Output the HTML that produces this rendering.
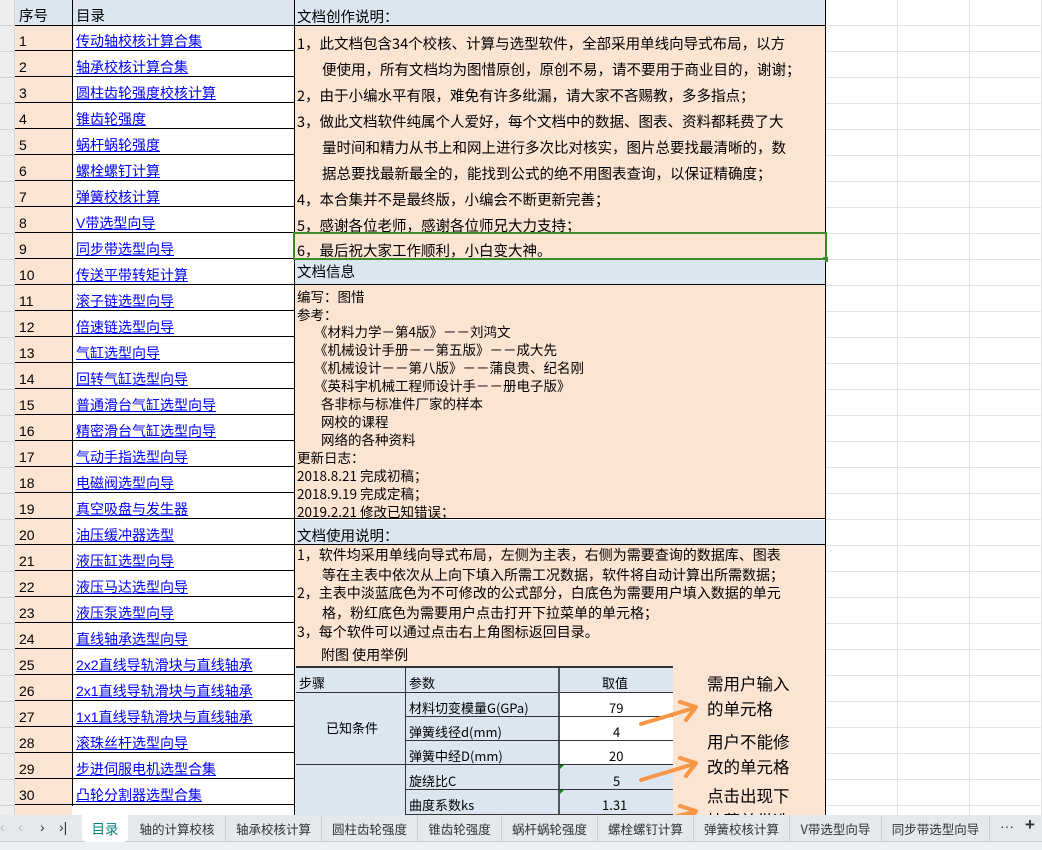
<!DOCTYPE html>
<html><head><meta charset="utf-8"><style>
*{margin:0;padding:0;box-sizing:border-box}
body{width:1042px;height:850px;overflow:hidden;background:#fff;font-family:"Liberation Sans","Noto Sans CJK SC",sans-serif;color:#000;position:relative}
.a{position:absolute;white-space:nowrap}
.r{position:absolute;left:15px;width:279px;height:26px;border-bottom:1px solid #000}
.r .n{position:absolute;left:0;width:57px;height:25px;font-size:14px;padding:8px 0 0 4px}
.r .l{position:absolute;left:61px;top:6px;font-size:14px;color:#0000ff;text-decoration:underline}
.t{position:absolute;font-size:14.5px;white-space:nowrap;font-family:"Noto Sans CJK SC",sans-serif}
.s{position:absolute;font-size:13.5px;white-space:nowrap;font-family:"Noto Sans CJK SC",sans-serif;line-height:18px}
.tab{position:absolute;top:815px;height:27px;font-size:12.5px;font-family:"Noto Sans CJK SC",sans-serif;line-height:27px;color:#333;border-right:1px solid #c8ced3;text-align:center}
</style></head><body>
<!-- right grid -->
<div class="a" style="left:826px;top:0;width:216px;height:815px;background-image:linear-gradient(to right,#e2e2e2 1px,transparent 1px),linear-gradient(to bottom,#e2e2e2 1px,transparent 1px);background-size:72px 26px;background-position:71px 25px"></div>
<!-- row header -->
<div class="a" style="left:0;top:0;width:15px;height:815px;background:#eeeeee;border-right:1px solid #d4d4d4"></div>
<div class="a" style="left:0;top:0;width:15px;height:815px;background-image:linear-gradient(to bottom,#d4d4d4 1px,transparent 1px);background-size:15px 26px;background-position:0 25px"></div>
<!-- col A peach -->
<div class="a" style="left:15px;top:26px;width:57px;height:789px;background:#fce4d3"></div>
<!-- header row -->
<div class="a" style="left:15px;top:0;width:811px;height:26px;background:#dce6f1;border-bottom:1px solid #000"></div>
<div class="a" style="left:72px;top:0;width:1px;height:806px;background:#000"></div>
<div class="a" style="left:294px;top:0;width:1px;height:815px;background:#000"></div>
<div class="a" style="left:825px;top:0;width:1px;height:815px;background:#000"></div>
<div class="t" style="left:19px;top:5px">序号</div>
<div class="t" style="left:76px;top:5px">目录</div>
<div class="t" style="left:297px;top:6px">文档创作说明：</div>
<!-- left rows -->
<div class="r" style="top:25px"><div class="n">1</div><div class="l">传动轴校核计算合集</div></div>
<div class="r" style="top:51px"><div class="n">2</div><div class="l">轴承校核计算合集</div></div>
<div class="r" style="top:77px"><div class="n">3</div><div class="l">圆柱齿轮强度校核计算</div></div>
<div class="r" style="top:103px"><div class="n">4</div><div class="l">锥齿轮强度</div></div>
<div class="r" style="top:129px"><div class="n">5</div><div class="l">蜗杆蜗轮强度</div></div>
<div class="r" style="top:155px"><div class="n">6</div><div class="l">螺栓螺钉计算</div></div>
<div class="r" style="top:181px"><div class="n">7</div><div class="l">弹簧校核计算</div></div>
<div class="r" style="top:207px"><div class="n">8</div><div class="l">V带选型向导</div></div>
<div class="r" style="top:233px"><div class="n">9</div><div class="l">同步带选型向导</div></div>
<div class="r" style="top:259px"><div class="n">10</div><div class="l">传送平带转矩计算</div></div>
<div class="r" style="top:285px"><div class="n">11</div><div class="l">滚子链选型向导</div></div>
<div class="r" style="top:311px"><div class="n">12</div><div class="l">倍速链选型向导</div></div>
<div class="r" style="top:337px"><div class="n">13</div><div class="l">气缸选型向导</div></div>
<div class="r" style="top:363px"><div class="n">14</div><div class="l">回转气缸选型向导</div></div>
<div class="r" style="top:389px"><div class="n">15</div><div class="l">普通滑台气缸选型向导</div></div>
<div class="r" style="top:415px"><div class="n">16</div><div class="l">精密滑台气缸选型向导 </div></div>
<div class="r" style="top:441px"><div class="n">17</div><div class="l">气动手指选型向导</div></div>
<div class="r" style="top:467px"><div class="n">18</div><div class="l">电磁阀选型向导</div></div>
<div class="r" style="top:493px"><div class="n">19</div><div class="l">真空吸盘与发生器</div></div>
<div class="r" style="top:519px"><div class="n">20</div><div class="l">油压缓冲器选型</div></div>
<div class="r" style="top:545px"><div class="n">21</div><div class="l">液压缸选型向导</div></div>
<div class="r" style="top:571px"><div class="n">22</div><div class="l">液压马达选型向导</div></div>
<div class="r" style="top:597px"><div class="n">23</div><div class="l">液压泵选型向导</div></div>
<div class="r" style="top:623px"><div class="n">24</div><div class="l">直线轴承选型向导</div></div>
<div class="r" style="top:649px"><div class="n">25</div><div class="l">2x2直线导轨滑块与直线轴承</div></div>
<div class="r" style="top:675px"><div class="n">26</div><div class="l">2x1直线导轨滑块与直线轴承</div></div>
<div class="r" style="top:701px"><div class="n">27</div><div class="l">1x1直线导轨滑块与直线轴承</div></div>
<div class="r" style="top:727px"><div class="n">28</div><div class="l">滚珠丝杆选型向导</div></div>
<div class="r" style="top:753px"><div class="n">29</div><div class="l">步进伺服电机选型合集</div></div>
<div class="r" style="top:779px"><div class="n">30</div><div class="l">凸轮分割器选型合集</div></div>
<!-- section 1 -->
<div class="a" style="left:295px;top:26px;width:530px;height:233px;background:#fce4d3"></div>
<div class="t" style="left:297px;top:33px">1，此文档包含34个校核、计算与选型软件，全部采用单线向导式布局，以方</div>
<div class="t" style="left:322px;top:59px">便使用，所有文档均为图惜原创，原创不易，请不要用于商业目的，谢谢；</div>
<div class="t" style="left:297px;top:85px">2，由于小编水平有限，难免有许多纰漏，请大家不吝赐教，多多指点；</div>
<div class="t" style="left:297px;top:111px">3，做此文档软件纯属个人爱好，每个文档中的数据、图表、资料都耗费了大</div>
<div class="t" style="left:322px;top:137px">量时间和精力从书上和网上进行多次比对核实，图片总要找最清晰的，数</div>
<div class="t" style="left:322px;top:163px">据总要找最新最全的，能找到公式的绝不用图表查询，以保证精确度；</div>
<div class="t" style="left:297px;top:189px">4，本合集并不是最终版，小编会不断更新完善；</div>
<div class="t" style="left:297px;top:215px">5，感谢各位老师，感谢各位师兄大力支持；</div>
<div class="t" style="left:297px;top:240px">6，最后祝大家工作顺利，小白变大神。</div>
<div class="a" style="left:293px;top:232px;width:534px;height:28px;border:2px solid #3c8c28"></div>
<div class="a" style="left:823px;top:257px;width:5px;height:5px;background:#3c8c28"></div>
<!-- section 2 -->
<div class="a" style="left:295px;top:260px;width:530px;height:25px;background:#dce6f1;border-bottom:1px solid #000"></div>
<div class="t" style="left:297px;top:261px">文档信息</div>
<div class="a" style="left:295px;top:285px;width:530px;height:234px;background:#fce4d3;border-bottom:1px solid #000"></div>
<div class="s" style="left:297px;top:287px">编写：图惜</div>
<div class="s" style="left:297px;top:305px">参考：</div>
<div class="s" style="left:314px;top:322px">《材料力学－第4版》－－刘鸿文</div>
<div class="s" style="left:314px;top:340px">《机械设计手册－－第五版》－－成大先</div>
<div class="s" style="left:314px;top:358px">《机械设计－－第八版》－－蒲良贵、纪名刚</div>
<div class="s" style="left:314px;top:376px">《英科宇机械工程师设计手－－册电子版》</div>
<div class="s" style="left:321px;top:394px">各非标与标准件厂家的样本</div>
<div class="s" style="left:321px;top:412px">网校的课程</div>
<div class="s" style="left:321px;top:430px">网络的各种资料</div>
<div class="s" style="left:297px;top:448px">更新日志：</div>
<div class="s" style="left:297px;top:466px">2018.8.21 完成初稿；</div>
<div class="s" style="left:297px;top:484px">2018.9.19 完成定稿；</div>
<div class="s" style="left:297px;top:502px">2019.2.21 修改已知错误；</div>
<!-- section 3 -->
<div class="a" style="left:295px;top:520px;width:530px;height:25px;background:#dce6f1;border-bottom:1px solid #000"></div>
<div class="t" style="left:297px;top:525px">文档使用说明：</div>
<div class="a" style="left:295px;top:545px;width:530px;height:270px;background:#fce4d3"></div>
<div class="s" style="left:297px;top:545px;font-size:14px;line-height:20px">1，软件均采用单线向导式布局，左侧为主表，右侧为需要查询的数据库、图表</div>
<div class="s" style="left:322px;top:565px;font-size:14px;line-height:20px">等在主表中依次从上向下填入所需工况数据，软件将自动计算出所需数据；</div>
<div class="s" style="left:297px;top:583px;font-size:14px;line-height:20px">2，主表中淡蓝底色为不可修改的公式部分，白底色为需要用户填入数据的单元</div>
<div class="s" style="left:322px;top:603px;font-size:14px;line-height:20px">格，粉红底色为需要用户点击打开下拉菜单的单元格；</div>
<div class="s" style="left:297px;top:622px;font-size:14px;line-height:20px">3，每个软件可以通过点击右上角图标返回目录。</div>
<div class="s" style="left:321px;top:645px;font-size:14px;line-height:20px">附图 使用举例</div>
<!-- table -->
<div class="a" style="left:296px;top:666px;width:377px;height:149px;background:#dce6f1;border-top:2px solid #333;overflow:hidden">
<div class="a" style="left:0;top:0;width:377px;height:25px;border-bottom:1px solid #333"></div>
<div class="a" style="left:0;top:24px;width:109px;height:73px;border-bottom:1px solid #333"></div>
<div class="a" style="left:109px;top:0;width:1px;height:150px;background:#333"></div>
<div class="a" style="left:262px;top:0;width:2px;height:150px;background:#555"></div>
<div class="a" style="left:264px;top:25px;width:113px;height:72px;background:#fff"></div>
<div class="a" style="left:110px;top:48px;width:267px;height:1px;background:#333"></div>
<div class="a" style="left:110px;top:72px;width:267px;height:1px;background:#333"></div>
<div class="a" style="left:110px;top:96px;width:267px;height:1px;background:#333"></div>
<div class="a" style="left:110px;top:121px;width:267px;height:1px;background:#333"></div>
<div class="a" style="left:110px;top:146px;width:267px;height:1px;background:#333"></div>
<div class="a" style="left:264px;top:97px;border-top:4px solid #1a7a1a;border-right:4px solid transparent"></div>
<div class="a" style="left:264px;top:122px;border-top:4px solid #1a7a1a;border-right:4px solid transparent"></div>
<div class="s" style="left:3px;top:6px;font-size:13px">步骤</div>
<div class="s" style="left:113px;top:6px;font-size:13px">参数</div>
<div class="s" style="left:306px;top:6px;font-size:13px">取值</div>
<div class="s" style="left:30px;top:51px;font-size:13px">已知条件</div>
<div class="s" style="left:113px;top:31px;font-size:13px">材料切变模量G(GPa)</div>
<div class="s" style="left:113px;top:55px;font-size:13px">弹簧线径d(mm)</div>
<div class="s" style="left:113px;top:79px;font-size:13px">弹簧中经D(mm)</div>
<div class="s" style="left:113px;top:104px;font-size:13px">旋绕比C</div>
<div class="s" style="left:113px;top:128px;font-size:13px">曲度系数ks</div>
<div class="s" style="left:313px;top:31px;font-size:13px">79</div>
<div class="s" style="left:317px;top:55px;font-size:13px">4</div>
<div class="s" style="left:313px;top:79px;font-size:13px">20</div>
<div class="s" style="left:317px;top:104px;font-size:13px">5</div>
<div class="s" style="left:306px;top:128px;font-size:13px">1.31</div>
</div>
<!-- notes -->
<div class="s" style="left:707px;top:671px;font-size:16.5px;line-height:25px">需用户输入<br>的单元格</div>
<div class="s" style="left:707px;top:729px;font-size:16.5px;line-height:25px">用户不能修<br>改的单元格</div>
<div class="s" style="left:707px;top:783px;font-size:16.5px;line-height:25px">点击出现下<br>拉菜单供选</div>
<svg class="a" style="left:630px;top:690px" width="80" height="130" viewBox="0 0 80 130">
<g stroke="#f79646" stroke-width="4" fill="none" stroke-linecap="round" stroke-linejoin="round">
<path d="M11 34 L64 18"/><path d="M50 12 L66 17 L56 30"/>
<path d="M11 90 L64 74"/><path d="M50 68 L66 73 L56 86"/>
<path d="M11 135 L64 122"/><path d="M50 116 L66 121 L56 134"/>
</g></svg>
<!-- tab bar -->
<div class="a" style="left:0;top:815px;width:1042px;height:27px;background:#e4e9ed;border-bottom:1px solid #c8ced3"></div>
<div class="a" style="left:0;top:842px;width:1042px;height:8px;background:#eef1f3"></div>
<div class="a" style="left:0;top:819px;font-size:14px;color:#bbb">‹</div>
<div class="a" style="left:18px;top:819px;font-size:14px;color:#bbb">‹</div>
<div class="a" style="left:40px;top:819px;font-size:14px;color:#333">›</div>
<div class="a" style="left:59px;top:819px;font-size:14px;color:#333">›|</div>
<div class="a" style="left:82px;top:815px;width:46px;height:27px;background:#fff;border-radius:0 0 5px 5px;color:#0a7f7f;font-size:13.5px;line-height:26px;text-align:center;font-family:'Noto Sans CJK SC',sans-serif">目录</div>
<div class="tab" style="left:129px;width:97px">轴的计算校核</div>
<div class="tab" style="left:226px;width:96px">轴承校核计算</div>
<div class="tab" style="left:322px;width:96px">圆柱齿轮强度</div>
<div class="tab" style="left:418px;width:84px">锥齿轮强度</div>
<div class="tab" style="left:502px;width:96px">蜗杆蜗轮强度</div>
<div class="tab" style="left:598px;width:96px">螺栓螺钉计算</div>
<div class="tab" style="left:694px;width:96px">弹簧校核计算</div>
<div class="tab" style="left:790px;width:92px">V带选型向导</div>
<div class="tab" style="left:882px;width:108px">同步带选型向导</div>
<div class="a" style="left:1000px;top:818px;font-size:14px;color:#333">···</div>
<div class="a" style="left:1025px;top:815px;font-size:17px;color:#333;font-weight:bold">+</div>
</body></html>
